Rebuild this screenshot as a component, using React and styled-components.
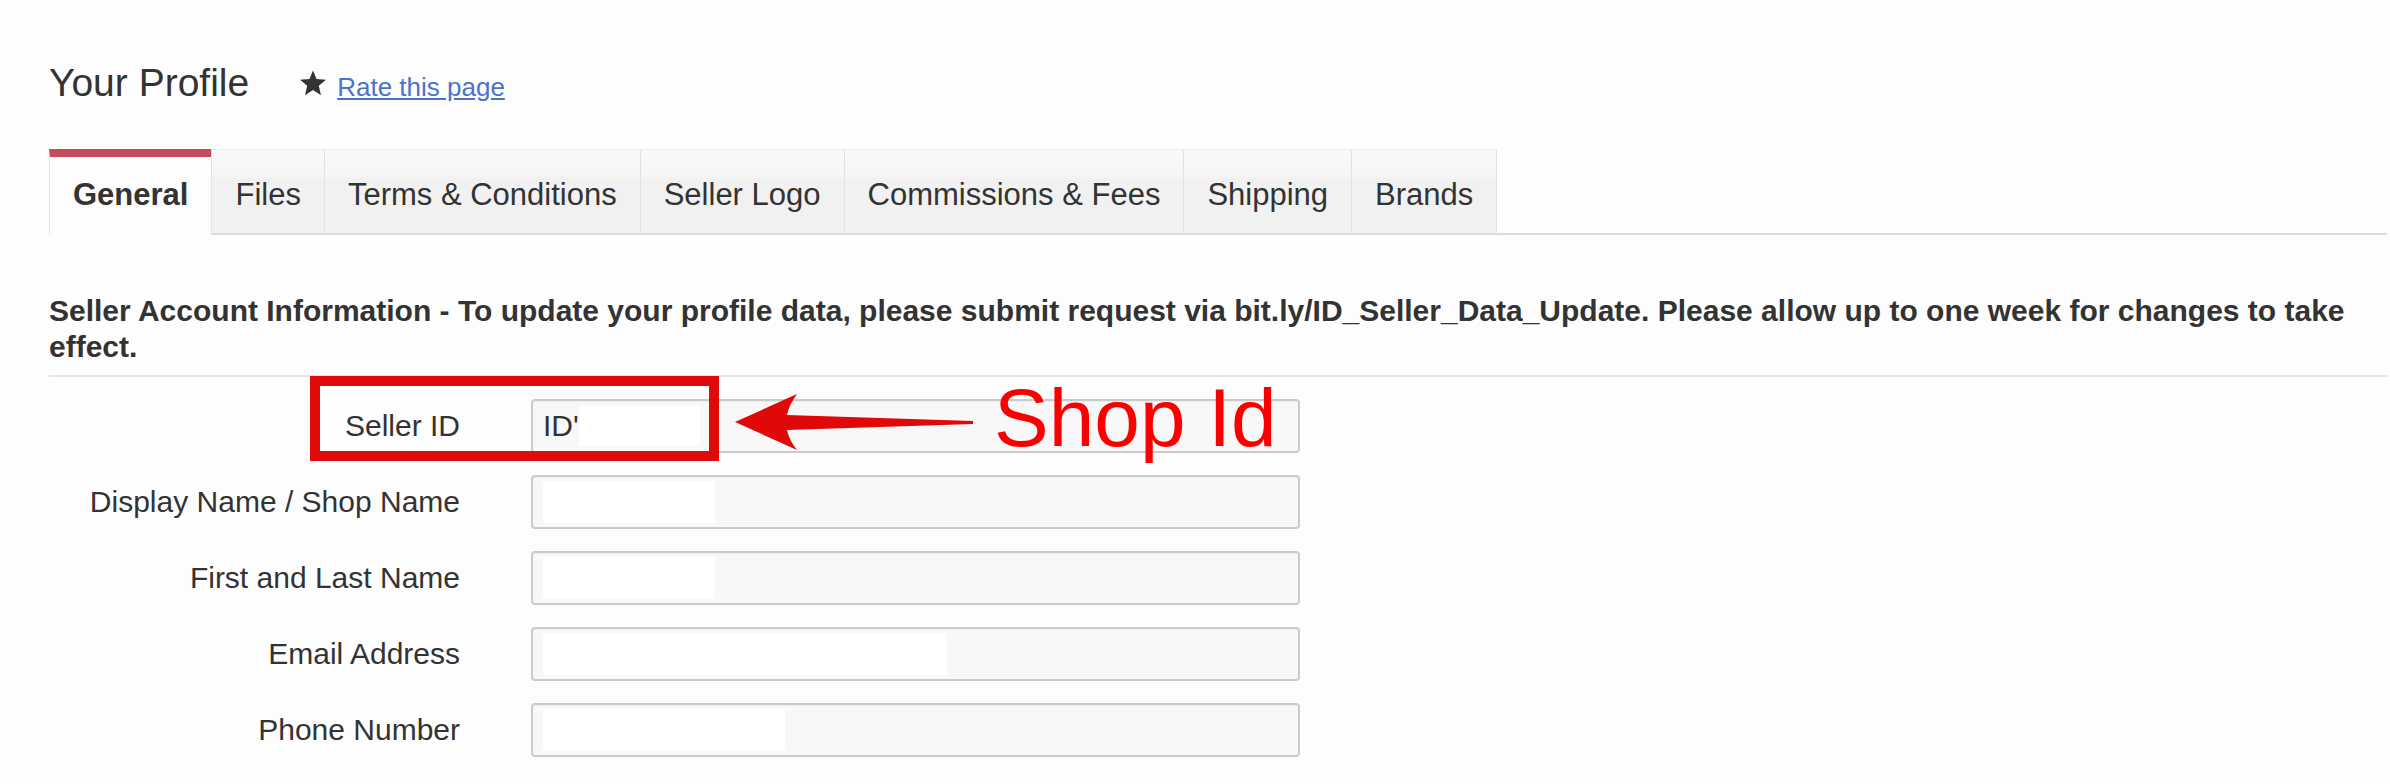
import React from 'react';
import styled, { createGlobalStyle } from 'styled-components';

const GlobalStyle = createGlobalStyle`
  body {
    margin: 0;
    background: #fdfdfd;
    color: #333;
    font-family: "Liberation Sans", Arial, Helvetica, sans-serif;
  }
`;

const Page = styled.div`
  padding: 0 3px 0 49px;
`;

const TitleRow = styled.div`
  display: flex;
  align-items: baseline;
  padding-top: 63px;
`;

const Title = styled.h1`
  margin: 0;
  font-size: 39px;
  line-height: 39px;
  font-weight: normal;
  color: #333;
`;

const StarIcon = styled.svg`
  width: 28px;
  height: 26px;
  margin-left: 50px;
  fill: #333;
`;

const RateLink = styled.a`
  margin-left: 10px;
  font-size: 26px;
  color: #4a73c8;
  text-decoration: underline;
`;

const TabBar = styled.div`
  display: flex;
  align-items: flex-end;
  margin-top: 46px;
  border-bottom: 2px solid #dcdcdc;
`;

const Tab = styled.div`
  padding: ${(p) => (p.$active ? '0 23px' : '7px 23px 0')};
  margin-bottom: -2px;
  font-size: 31px;
  line-height: 76px;
  font-weight: ${(p) => (p.$active ? 'bold' : 'normal')};
  color: #333;
  white-space: nowrap;
  border-left: 1px solid #e2e2e2;
  border-top: ${(p) => (p.$active ? '8px solid #c34d5a' : '1px solid #ededed')};
  border-bottom: 2px solid ${(p) => (p.$active ? '#fdfdfd' : '#dcdcdc')};
  background: ${(p) =>
    p.$active ? '#fdfdfd' : 'linear-gradient(#f9f9f9 0%, #f6f6f6 30%, #f1f1f1 35%, #f1f1f1 100%)'};

  &:last-child {
    border-right: 1px solid #e2e2e2;
  }
`;

const SectionHeading = styled.p`
  margin: 58px 0 0;
  font-size: 30px;
  line-height: 36px;
  font-weight: bold;
  color: #333;
`;

const Divider = styled.div`
  margin-top: 10px;
  height: 2px;
  background: #e5e5e5;
`;

const Form = styled.div`
  display: flex;
  flex-direction: column;
  gap: 22px;
  margin-top: 22px;
  padding-bottom: 30px;
`;

const FormRow = styled.div`
  position: relative;
  display: grid;
  grid-template-columns: 411px 769px;
  column-gap: 71px;
  align-items: center;
`;

const Label = styled.div`
  text-align: right;
  font-size: 30px;
  color: #333;
`;

const Field = styled.div`
  box-sizing: border-box;
  height: 54px;
  display: flex;
  align-items: center;
  padding: 0 10px;
  border: 2px solid #cbcbcb;
  border-radius: 4px;
  background: #f8f8f8;
  box-shadow: inset 0 1px 1px rgba(0, 0, 0, 0.05);
  font-size: 30px;
  color: #333;
`;

const Redacted = styled.span`
  display: block;
  height: ${(p) => p.$h || 42}px;
  background: #fff;
`;

const RedBox = styled.div`
  position: absolute;
  left: 261px;
  top: -23px;
  width: 409px;
  height: 85px;
  box-sizing: border-box;
  border: 10px solid #e10a0a;
  pointer-events: none;
`;

const Arrow = styled.svg`
  position: absolute;
  left: 684px;
  top: -7px;
  width: 242px;
  height: 60px;
  fill: #e00808;
`;

const ShopIdNote = styled.div`
  position: absolute;
  left: 945px;
  top: -22px;
  font-size: 82px;
  line-height: 82px;
  color: #fb0000;
  white-space: nowrap;
`;

const tabs = ['General', 'Files', 'Terms & Conditions', 'Seller Logo', 'Commissions & Fees', 'Shipping', 'Brands'];

const rows = [
  { label: 'Display Name / Shop Name', hidden: 172 },
  { label: 'First and Last Name', hidden: 171 },
  { label: 'Email Address', hidden: 403 },
  { label: 'Phone Number', hidden: 242 },
];

export default function App() {
  return (
    <Page>
      <GlobalStyle />
      <TitleRow>
        <Title>Your Profile</Title>
        <StarIcon viewBox="0 0 24 23">
          <polygon points="12,0.5 15.1,8 23.5,8.6 17.1,14 19.1,22.4 12,17.8 4.9,22.4 6.9,14 0.5,8.6 8.9,8" />
        </StarIcon>
        <RateLink href="#">Rate this page</RateLink>
      </TitleRow>

      <TabBar>
        {tabs.map((t, i) => (
          <Tab key={t} $active={i === 0}>
            {t}
          </Tab>
        ))}
      </TabBar>

      <SectionHeading>
        Seller Account Information - To update your profile data, please submit request via
        bit.ly/ID_Seller_Data_Update. Please allow up to one week for changes to take effect.
      </SectionHeading>
      <Divider />

      <Form>
        <FormRow>
          <Label>Seller ID</Label>
          <Field>
            ID'
            <Redacted $h={40} style={{ width: 121 }} />
          </Field>
          <RedBox />
          <Arrow viewBox="0 0 242 60">
            <path d="M2,30 L64,2 Q56,13 54,23 L240,29 L240,32 L54,38 Q56,48 64,58 Z" />
          </Arrow>
          <ShopIdNote>Shop Id</ShopIdNote>
        </FormRow>
        {rows.map((r) => (
          <FormRow key={r.label}>
            <Label>{r.label}</Label>
            <Field>
              <Redacted style={{ width: r.hidden }} />
            </Field>
          </FormRow>
        ))}
      </Form>
    </Page>
  );
}
